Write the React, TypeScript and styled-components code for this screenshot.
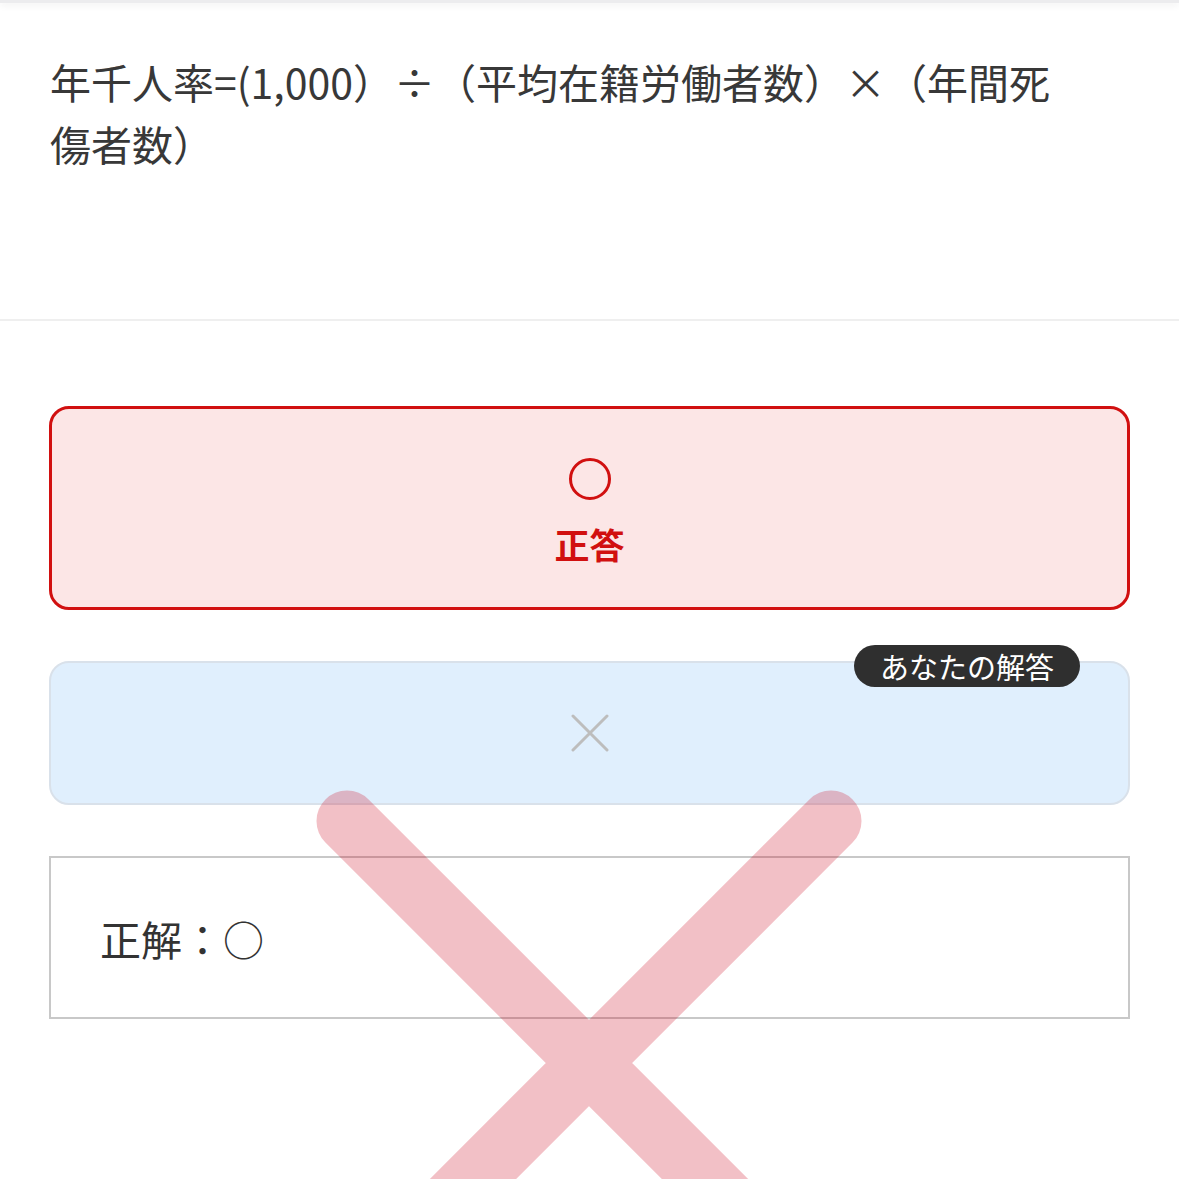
import React from "react";
import styled, { createGlobalStyle } from "styled-components";

const GlobalStyle = createGlobalStyle`
  html, body {
    margin: 0;
    padding: 0;
    background: #ffffff;
    overflow: hidden;
  }
  body {
    font-family: "Noto Sans CJK JP", "Noto Sans", sans-serif;
    color: #333333;
  }
  * { box-sizing: border-box; }
`;

const Page = styled.div`
  position: relative;
  width: 1179px;
  height: 1179px;
  overflow: hidden;
  background: #ffffff;
`;

const TopShade = styled.div`
  height: 3px;
  background: #ececee;
  box-shadow: 0 2px 7px rgba(0, 0, 0, 0.09);
`;

const QuestionSection = styled.section`
  padding: 47px 50px 145px 50px;
  border-bottom: 2px solid #efefef;
`;

const QuestionText = styled.p`
  margin: 0;
  max-width: 1025px;
  font-size: 41px;
  line-height: 62px;
  color: #383838;
  line-break: strict;
`;

const Answers = styled.div`
  display: flex;
  flex-direction: column;
  gap: 51px;
  padding: 85px 49px 0 49px;
`;

const CorrectCard = styled.div`
  display: flex;
  flex-direction: column;
  align-items: center;
  gap: 26px;
  padding: 49px 0 46px;
  border: 3px solid #d11010;
  border-radius: 20px;
  background: #fce6e6;
`;

const RedCircle = styled.div`
  width: 42px;
  height: 42px;
  border: 3.5px solid #d11010;
  border-radius: 50%;
`;

const CorrectLabel = styled.div`
  font-size: 35px;
  line-height: 35px;
  font-weight: 700;
  color: #d11010;
`;

const ChoiceWrap = styled.div`
  position: relative;
`;

const ChoiceCard = styled.div`
  display: flex;
  justify-content: center;
  align-items: center;
  height: 144px;
  border: 2px solid #d9e1ea;
  border-radius: 20px;
  background: #e0effd;
`;

const YourBadge = styled.div`
  position: absolute;
  top: -16px;
  right: 50px;
  height: 42px;
  padding: 0 26px;
  border-radius: 21px;
  background: #2f2f2f;
  color: #ffffff;
  font-size: 29px;
  line-height: 42px;
  font-weight: 400;
  white-space: nowrap;
`;

const ExplainBox = styled.div`
  display: flex;
  align-items: center;
  height: 163px;
  padding: 0 49px;
  border: 2px solid #c8c8c8;
  font-size: 41px;
  line-height: 62px;
  color: #333333;
`;

const BigCross = styled.svg`
  position: absolute;
  left: 0;
  top: 0;
  width: 1179px;
  height: 1179px;
  pointer-events: none;
  opacity: 0.245;
`;

const GrayCross = () => (
  <svg width="38" height="38" viewBox="0 0 38 38" aria-hidden="true">
    <path
      d="M2 2 L36 36 M36 2 L2 36"
      stroke="#bdbdbd"
      strokeWidth="3"
      strokeLinecap="round"
      fill="none"
    />
  </svg>
);

export default function App() {
  return (
    <Page>
      <GlobalStyle />
      <TopShade />
      <QuestionSection>
        <QuestionText>
          年千人率=(1,000）÷（平均在籍労働者数）×（年間死傷者数）
        </QuestionText>
      </QuestionSection>
      <Answers>
        <CorrectCard>
          <RedCircle />
          <CorrectLabel>正答</CorrectLabel>
        </CorrectCard>
        <ChoiceWrap>
          <ChoiceCard>
            <GrayCross />
          </ChoiceCard>
          <YourBadge>あなたの解答</YourBadge>
        </ChoiceWrap>
        <ExplainBox>正解：○</ExplainBox>
      </Answers>
      <BigCross viewBox="0 0 1179 1179" aria-hidden="true">
        <path
          d="M347 821 L831 1305 M831 821 L347 1305"
          stroke="#ce0019"
          strokeWidth="61"
          strokeLinecap="round"
          fill="none"
        />
      </BigCross>
    </Page>
  );
}
